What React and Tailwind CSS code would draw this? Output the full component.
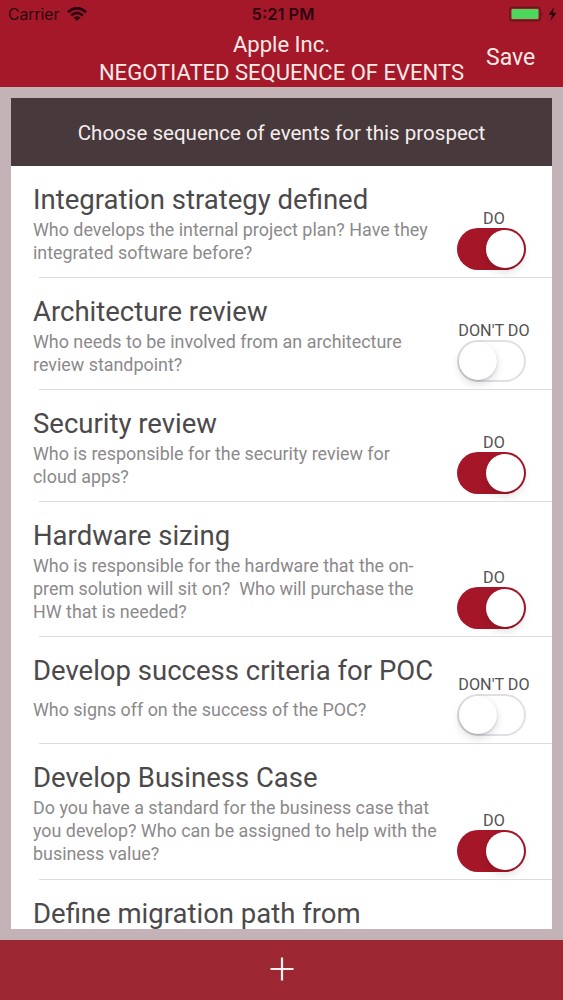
const EVENTS = [
  {
    title: "Integration strategy defined",
    lines: ["Who develops the internal project plan? Have they", "integrated software before?"],
    on: true,
    height: "h-28",
  },
  {
    title: "Architecture review",
    lines: ["Who needs to be involved from an architecture", "review standpoint?"],
    on: false,
    height: "h-28",
  },
  {
    title: "Security review",
    lines: ["Who is responsible for the security review for", "cloud apps?"],
    on: true,
    height: "h-28",
  },
  {
    title: "Hardware sizing",
    lines: [
      "Who is responsible for the hardware that the on-",
      "prem solution will sit on?  Who will purchase the",
      "HW that is needed?",
    ],
    on: true,
    height: "h-[135px]",
  },
  {
    title: "Develop success criteria for POC",
    lines: ["Who signs off on the success of the POC?"],
    on: false,
    height: "h-[107px]",
    descClass: "pt-[10px]",
  },
  {
    title: "Develop Business Case",
    lines: [
      "Do you have a standard for the business case that",
      "you develop? Who can be assigned to help with the",
      "business value?",
    ],
    on: true,
    height: "h-[136px]",
  },
];

function Toggle({ on }) {
  return on ? (
    <div className="flex h-[42px] w-[69px] items-center justify-end rounded-full bg-[#a51628] pr-[2px]">
      <div className="size-[38px] rounded-full bg-white shadow-[0_4px_9px_rgba(0,0,0,0.14)]" />
    </div>
  ) : (
    <div className="flex h-[42px] w-[69px] items-center rounded-full border-2 border-[#e1dfe3] bg-white">
      <div className="size-[38px] rounded-full bg-white shadow-[0_4px_8px_rgba(0,0,0,0.14),0_1px_2px_rgba(0,0,0,0.18)]" />
    </div>
  );
}

function EventRow({ title, lines, on, height, descClass = "pt-px" }) {
  return (
    <div className={`flex flex-col ${height}`}>
      <div className="flex flex-1 justify-between pl-[22px] pr-[26px]">
        <div className="pt-[17px]">
          <h2 className="whitespace-nowrap text-[27.5px] leading-[34px] text-[#4c494a]">{title}</h2>
          <div className={descClass}>
            {lines.map((line) => (
              <p key={line} className="whitespace-pre text-[17.9px] leading-[23px] text-[#8b898a]">
                {line}
              </p>
            ))}
          </div>
        </div>
        <div className="flex w-[69px] shrink-0 flex-col items-center justify-end pb-[7px]">
          <span className="-mr-[5px] whitespace-nowrap text-[16.2px] leading-[19px] text-[#555253]">{on ? "DO" : "DON'T DO"}</span>
          <Toggle on={on} />
        </div>
      </div>
      <div className="ml-7 h-px shrink-0 bg-[#dddcdd]" />
    </div>
  );
}

function StatusBar() {
  return (
    <div className="grid h-7 grid-cols-3 items-center pl-2 pr-[6px] text-[#2d0710]">
      <div className="flex items-center gap-2">
        <span className="pt-px font-[Inter,sans-serif] text-[15.7px] leading-5">Carrier</span>
        <svg width="20" height="14" viewBox="0 0 20 14" fill="none">
          <path d="M1 5.1Q10-2.7 19 5.1" stroke="currentColor" strokeWidth="2.9" />
          <path d="M4.2 8.4Q10 3.3 15.8 8.4" stroke="currentColor" strokeWidth="2.7" />
          <path d="M6.6 10.6Q10 7.7 13.4 10.6L10 14Z" fill="currentColor" />
        </svg>
      </div>
      <span className="pl-px text-center font-[Inter,sans-serif] text-[16.5px] font-semibold leading-5">5:21 PM</span>
      <div className="flex items-center justify-end gap-1">
        <svg width="35" height="16" viewBox="0 0 35 16">
          <rect x="0.75" y="1.25" width="30.5" height="13.5" rx="2.8" fill="none" stroke="#701420" strokeWidth="1.5" />
          <rect x="2.5" y="3" width="27" height="10" rx="1" fill="#4bd65c" />
          <path d="M32.6 5.5Q35 8 32.6 10.5Z" fill="#701420" />
        </svg>
        <svg width="9" height="14" viewBox="0 0 9 14">
          <path d="M6 0L0.5 7.8H4L2.6 14L8.5 5.8H5Z" fill="currentColor" />
        </svg>
      </div>
    </div>
  );
}

export default function App() {
  return (
    <div className="flex h-[1000px] w-[563px] flex-col overflow-hidden bg-[#c4b3b6] font-[Roboto,sans-serif]">
      <header className="flex h-[87px] shrink-0 flex-col bg-[#a41829] text-[#fbe9e6]">
        <StatusBar />
        <div className="grid grid-cols-[97px_1fr_97px] items-center pt-[3px]">
          <span />
          <h1 className="whitespace-nowrap text-center text-[22.05px] leading-7">
            Apple Inc.
            <br />
            NEGOTIATED SEQUENCE OF EVENTS
          </h1>
          <button className="-mt-[2px] pl-5 text-left text-[23px] leading-7">Save</button>
        </div>
      </header>
      <main className="mx-[11px] my-[11px] flex min-h-0 flex-1 flex-col overflow-hidden bg-white">
        <div className="flex h-[68px] shrink-0 items-center justify-center bg-[#483a3c] pt-[2px] text-[20.55px] text-[#f5eded]">
          Choose sequence of events for this prospect
        </div>
        <div className="min-h-0 flex-1 overflow-hidden">
          {EVENTS.map((event) => (
            <EventRow key={event.title} {...event} />
          ))}
          <h2 className="pl-[22px] pt-[17px] text-[27.5px] leading-[34px] text-[#4c494a]">
            Define migration path from
          </h2>
        </div>
      </main>
      <footer className="flex h-[60px] shrink-0 items-center justify-center bg-[#9d2633]">
        <svg className="-mt-[2px]" width="24" height="24" viewBox="0 0 24 24" stroke="#fff1f1" strokeWidth="2.2">
          <path d="M12 0.5V23.5M0.5 12H23.5" />
        </svg>
      </footer>
    </div>
  );
}
